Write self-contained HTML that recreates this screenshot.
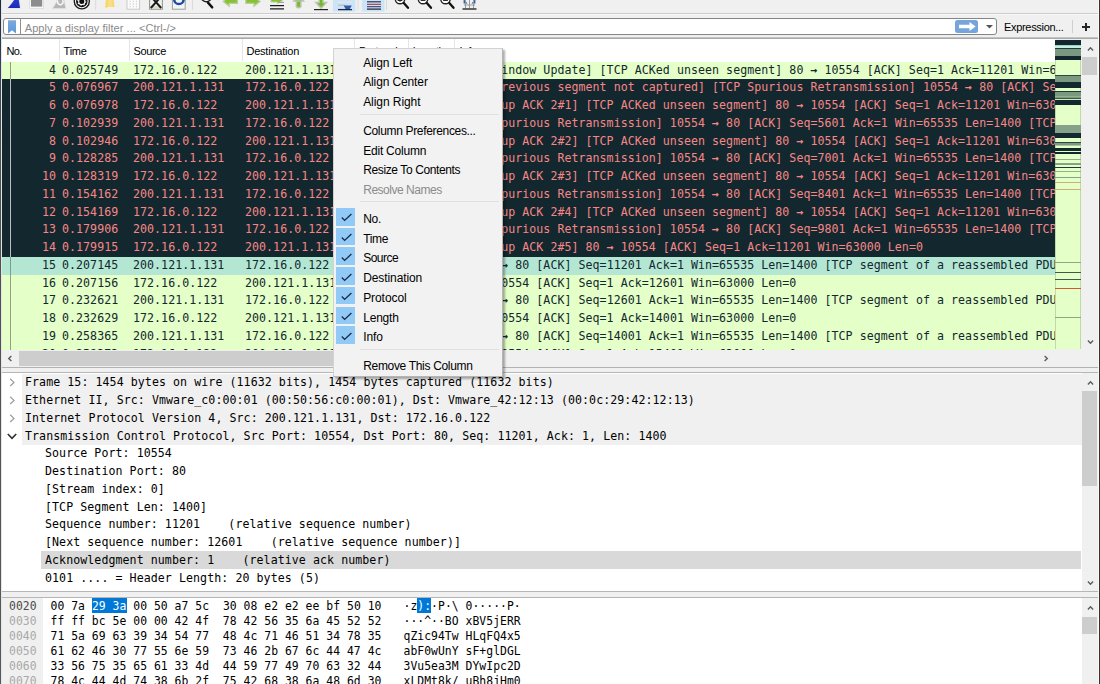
<!DOCTYPE html>
<html><head><meta charset="utf-8"><title>Wireshark</title>
<style>
html,body{margin:0;padding:0}
body{width:1100px;height:684px;overflow:hidden;background:#f0f0f0;position:relative;font-family:"Liberation Sans",sans-serif;font-size:12px;color:#000}
.abs{position:absolute}
.mono{font-family:"DejaVu Sans Mono","Liberation Mono",monospace;font-size:11.6px;letter-spacing:0.049px;white-space:pre}
#plist{position:absolute;left:2px;top:39px;width:1053px;height:311px;background:#fff;overflow:hidden}
.prow{position:absolute;left:0;width:1053px;height:18px;overflow:hidden}
.prow span{position:absolute;top:-0.8px;line-height:18px}
.g{background:#e4ffc7;color:#12272e}
.d{background:#12272e;color:#f78787}
.s{background:#b4e6d4;color:#12272e}
.hdr{position:absolute;top:0;height:22px;line-height:24px;font-size:11px;color:#000;white-space:nowrap}
.hsep{position:absolute;top:0;width:1px;height:22px;background:#e5e5e5}
#menu{position:absolute;left:333px;top:48px;width:168px;height:327px;background:#f2f2f2;border:1px solid #d2d2d2;border-right-color:#b4b4b4;border-bottom-color:#b4b4b4;box-shadow:1.5px 1.5px 2px rgba(0,0,0,.32);box-sizing:content-box}
.mi{position:absolute;left:29.2px;font-size:12px;line-height:20px;height:20px;color:#000;white-space:nowrap}
.mi.dis{color:#8b8b8b}
.msep{position:absolute;left:26px;right:3px;height:1px;background:#e0e0e0}
.chk{position:absolute;left:2.3px;width:18.7px;height:17.8px;background:#91c9f7}
#tree{position:absolute;left:2px;top:373px;width:1080px;height:219px;background:#fff;overflow:hidden}
.trow{position:absolute;left:0;width:1080px;height:18px}
.trow span{position:absolute;top:-0.3px;line-height:18px;color:#000;letter-spacing:0.071px}
#hex{position:absolute;left:2px;top:598px;width:1080px;height:86px;background:#fff;overflow:hidden}
.hrow{position:absolute;left:0;height:15px}
.hrow span{position:absolute;top:1.1px;line-height:15px;font-size:11.4px;letter-spacing:0.037px}
</style></head><body>

<div class="abs" style="left:0;top:0;width:1px;height:684px;background:linear-gradient(#1e2b46 0%,#2a3850 6%,#374557 10%,#4f4f4f 22%,#585858 100%);z-index:5"></div><div class="abs" style="left:1px;top:0;width:1px;height:684px;background:#e4e6e6;z-index:5"></div>
<div class="abs" style="left:1098px;top:0;width:1px;height:684px;background:#fbfaf6;z-index:5"></div><div class="abs" style="left:1099px;top:0;width:1px;height:684px;background:#3b3128;z-index:5"></div>
<div id="toolbar" class="abs" style="left:0;top:0;width:1099px;height:13px;overflow:hidden"><svg width="1099" height="13" viewBox="0 0 1099 13" style="position:absolute;left:0;top:0">
<defs><linearGradient id="fin" x1="0" y1="0" x2="0" y2="1"><stop offset="0" stop-color="#2c41d8"/><stop offset="1" stop-color="#1c2bb4"/></linearGradient>
<linearGradient id="fold" x1="0" y1="0" x2="1" y2="0"><stop offset="0" stop-color="#f6d25a"/><stop offset="0.5" stop-color="#f9e08a"/><stop offset="1" stop-color="#f6d566"/></linearGradient></defs>
<!-- shark fin -->
<path d="M15.4 -3 C12.8 1.5 9.8 5.6 6.2 9 L21.2 9 L19.2 -3 Z" fill="#e4e7f8"/>
<path d="M15.8 -3 C13.4 1.4 10.8 5 7.8 7.9 L20 7.9 L18.4 -3 Z" fill="url(#fin)"/>
<!-- stop -->
<rect x="29.6" y="-3" width="14" height="11.6" fill="#f7f7f7" stroke="#dddddd" stroke-width="0.8"/>
<rect x="31" y="-3" width="11.2" height="9.6" fill="#8d8d8d"/>
<!-- restart -->
<path d="M58.6 -3 C57 1.5 54.8 5.4 52.2 8.6 L65.8 8.6 L63.6 -3 Z" fill="#b7b7b7" stroke="#e0e0e0" stroke-width="0.9"/>
<path d="M58 0.6 A2.7 2.7 0 1 0 62.4 0.2" fill="none" stroke="#f6f6f6" stroke-width="1.5"/>
<!-- options -->
<circle cx="81.8" cy="1.4" r="7.5" fill="#fbfbfb" stroke="#1d1d1d" stroke-width="1.4"/>
<circle cx="81.8" cy="1.4" r="4.7" fill="#fff" stroke="#141414" stroke-width="2.1"/>
<circle cx="81.8" cy="1.4" r="3.9" fill="none" stroke="#fff" stroke-width="1.1" stroke-dasharray="1.2 1.85"/>
<circle cx="81.8" cy="1.4" r="2.5" fill="#101010"/>
<rect x="95.2" y="0" width="1" height="10" fill="#dadada"/>
<!-- folder -->
<path d="M106.2 -3 L113.4 -3 L114.5 7 L107.3 7 L106.6 8.4 L105.2 7 Z" fill="url(#fold)"/>
<!-- grid/save -->
<rect x="127" y="-3" width="12.6" height="12.2" fill="#fbfbfb" stroke="#c9c9c9" stroke-width="1"/>
<path d="M130.2 -2V8M133.3 -2V8M136.4 -2V8" stroke="#d4d4d4" stroke-width="1" stroke-dasharray="1.6 1" fill="none"/>
<!-- close -->
<rect x="149.6" y="-3" width="12.8" height="12.2" fill="#f1f1ea" stroke="#8f8f8f" stroke-width="1"/>
<rect x="150.2" y="6" width="11.6" height="2.6" fill="#dcdcc6"/>
<path d="M150.8 8 L161.2 -3.6 M161.2 8 L150.8 -3.6" stroke="#1a1a1a" stroke-width="2" fill="none"/>
<!-- reload -->
<rect x="172.4" y="-3" width="12.8" height="12.2" fill="#f3f4f7" stroke="#9d9d9d" stroke-width="1"/>
<path d="M174.2 -0.6 A4.7 4.7 0 0 0 183.6 -0.6" fill="none" stroke="#1b4b9c" stroke-width="2.5"/>
<rect x="192" y="0" width="1" height="10" fill="#dadada"/>
<!-- find -->
<circle cx="206.3" cy="-3.2" r="5" fill="#fff" stroke="#222" stroke-width="1.5"/>
<path d="M208 2.6 L212.2 7.4" stroke="#111" stroke-width="2.4" stroke-linecap="round"/>
<!-- back -->
<path d="M223.3 1.4 L229.2 -3.6 L229.2 -1 L237.4 -1 L237.4 3.4 L229.2 3.4 L229.2 6.2 Z" fill="#86c232" stroke="#b9cfa0" stroke-width="1.3"/>
<!-- fwd -->
<path d="M260 1.4 L254 -3.6 L254 -1 L245.8 -1 L245.8 3.4 L254 3.4 L254 6.2 Z" fill="#86c232" stroke="#b9cfa0" stroke-width="1.3"/>
<!-- goto -->
<path d="M271 -3 H279 L282.4 0.6 L277.4 3.6 L277.4 2 H271 Z" fill="#86c232" stroke="#b9cfa0" stroke-width="1"/>
<path d="M278.4 2.4H284" stroke="#9a9a9a" stroke-width="1"/>
<path d="M270 5.6H284M270 8.8H284" stroke="#1c1c1c" stroke-width="1.3"/>
<!-- first -->
<path d="M296.4 -3 H300.8 V6.6 Q298.6 8.8 296.4 6.6 Z" fill="#7dbb2e" stroke="#b8c2ae" stroke-width="1.5"/>
<path d="M293.8 1 L298.6 -4 L303.4 1 L300.8 1 L296.4 1 Z" fill="#7dbb2e" stroke="#b8c2ae" stroke-width="1.4"/>
<!-- last -->
<path d="M319.2 -3 H323 V2.4 H326.4 L321.1 8.2 L315.8 2.4 H319.2 Z" fill="#74b728" stroke="#b8c6aa" stroke-width="1.5"/>
<path d="M314 9.6H328" stroke="#222" stroke-width="1.2"/>
<!-- autoscroll (checked) -->
<rect x="333" y="-2" width="22.5" height="13.6" fill="#cce4f7"/>
<path d="M338 2.2H352" stroke="#e9e9e9" stroke-width="1"/>
<path d="M338 5.2H345" stroke="#b5b5b5" stroke-width="1"/>
<path d="M343.6 5.6 H351.8 L349.6 9.2 H345.8 Z" fill="#2b5da8"/>
<path d="M338 9.6H352" stroke="#1a2a44" stroke-width="1.3"/>
<rect x="357.5" y="0" width="1" height="10" fill="#dadada"/>
<!-- colorize (checked) -->
<rect x="362" y="-2" width="22.5" height="13.6" fill="#cce4f7"/>
<path d="M367 1.8H381" stroke="#1c2340" stroke-width="1.1"/>
<path d="M367 4.3H381" stroke="#b23232" stroke-width="1.1"/>
<path d="M367 6.7H381" stroke="#2a3a7a" stroke-width="1.1"/>
<path d="M367 9.1H381" stroke="#1a1a1a" stroke-width="1.2"/>
<rect x="386" y="0" width="1" height="10" fill="#dadada"/>
<!-- zoom in -->
<circle cx="400" cy="-0.9" r="4.7" fill="#fff" stroke="#222" stroke-width="1.4"/>
<path d="M400 -2V1.8M397.6 0.4H402.4" stroke="#222" stroke-width="1.2"/>
<path d="M403.8 3 L408 7.8" stroke="#111" stroke-width="2.3" stroke-linecap="round"/>
<!-- zoom out -->
<circle cx="423" cy="-0.9" r="4.7" fill="#fff" stroke="#222" stroke-width="1.4"/>
<path d="M420.6 0.4H425.4" stroke="#222" stroke-width="1.1"/>
<path d="M426.8 3 L431 7.8" stroke="#111" stroke-width="2.3" stroke-linecap="round"/>
<!-- zoom 1:1 -->
<circle cx="445.5" cy="-0.9" r="4.7" fill="#fff" stroke="#222" stroke-width="1.4"/>
<path d="M443.1 0.4H447.9" stroke="#222" stroke-width="1.1"/>
<path d="M449.3 3 L453.5 7.8" stroke="#111" stroke-width="2.3" stroke-linecap="round"/>
<!-- resize columns -->
<path d="M463.6 -1 L467.6 3.4 L463.6 3.4 Z M475.4 -1 L471.4 3.4 L475.4 3.4 Z" fill="#2b5da8"/>
<path d="M465.5 -2V8.4M469.5 -2V8.4M473.5 -2V8.4M464 5H475" stroke="#9a9a9a" stroke-width="1" fill="none"/>
<path d="M462.5 9H476.5" stroke="#1a1a1a" stroke-width="1.3"/>
</svg>
</div>
<div class="abs" style="left:1px;top:13px;width:1098px;height:1px;background:#cdcdcd"></div><div class="abs" style="left:1px;top:14px;width:1098px;height:1px;background:#f8f8f8"></div>
<div class="abs" style="left:3px;top:18px;width:992px;height:15px;border:1px solid #858585;border-radius:3px;background:#fff"></div>
<svg class="abs" style="left:8px;top:20px" width="8" height="14" viewBox="0 0 8 14"><defs><linearGradient id="bk" x1="0" y1="0" x2="0" y2="1"><stop offset="0" stop-color="#7eaadd"/><stop offset="1" stop-color="#5f97d6"/></linearGradient></defs><path d="M0 0.3H8V13.4L4 10.2L0 13.4Z" fill="url(#bk)"/></svg>
<div class="abs" style="left:20px;top:19px;width:1px;height:15px;background:#8f8f8f"></div>
<div class="abs" style="left:24.8px;top:17.6px;height:20px;line-height:21px;font-size:11px;letter-spacing:0.039px;color:#8a8a8a;white-space:nowrap">Apply a display filter ... &lt;Ctrl-/&gt;</div>
<div class="abs" style="left:955px;top:20px;width:23px;height:13px;background:#76a5db;border-radius:2.5px"></div>
<svg class="abs" style="left:958.5px;top:22.3px" width="17" height="9" viewBox="0 0 17 9"><path d="M0 2.8H10.5V0L16.6 4.5L10.5 9V6.2H0Z" fill="#fff"/></svg>
<svg class="abs" style="left:985.5px;top:25px" width="7" height="4" viewBox="0 0 7 4"><path d="M0 0H7L3.5 3.6Z" fill="#555"/></svg>
<div class="abs" style="left:1004px;top:17.4px;height:20px;line-height:21px;font-size:11px;letter-spacing:-0.316px;color:#000;white-space:nowrap">Expression...</div>
<div class="abs" style="left:1072px;top:20px;width:1px;height:13px;background:#cfcfcf"></div>
<div class="abs" style="left:1081.6px;top:26.2px;width:8.4px;height:1.7px;background:#262626"></div>
<div class="abs" style="left:1085px;top:22.8px;width:1.7px;height:8.4px;background:#262626"></div>

<div class="abs" style="left:1px;top:37px;width:1098px;height:1px;background:#c4c4c4"></div>
<div class="abs" style="left:1px;top:38px;width:1098px;height:1px;background:#a9a9a9"></div>
<div id="plist">
<div class="hdr" style="left:4.5px;letter-spacing:-0.642px">No.</div>
<div class="hdr" style="left:61.6px;letter-spacing:-0.262px">Time</div>
<div class="hdr" style="left:131.6px;letter-spacing:-0.427px">Source</div>
<div class="hdr" style="left:244.4px;letter-spacing:-0.204px">Destination</div>
<div class="hdr" style="left:357px;letter-spacing:-0.222px">Protocol</div>
<div class="hdr" style="left:410.8px;letter-spacing:-0.343px">Length</div>
<div class="hdr" style="left:457.4px;letter-spacing:-0.190px">Info</div>
<div class="hsep" style="left:57px"></div>
<div class="hsep" style="left:127px"></div>
<div class="hsep" style="left:240px"></div>
<div class="hsep" style="left:352px"></div>
<div class="hsep" style="left:406px"></div>
<div class="hsep" style="left:452px"></div>
<div class="prow mono g" style="top:22.50px"><i style="position:absolute;left:8px;top:0;width:1px;height:18px;background:#91a283"></i><span style="left:47px">4</span><span style="left:60px">0.025749</span><span style="left:131px">172.16.0.122</span><span style="left:243px">200.121.1.131</span><span style="left:357px">TCP</span><span style="left:436px">54</span><span style="left:457px">[TCP Window Update] [TCP ACKed unseen segment] 80 <b>→</b> 10554 [ACK] Seq=1 Ack=11201 Win=63000 Len=0</span></div>
<div class="prow mono d" style="top:40.25px"><i style="position:absolute;left:8px;top:0;width:1px;height:18px;background:#bdbbc3"></i><span style="left:47px">5</span><span style="left:60px">0.076967</span><span style="left:131px">200.121.1.131</span><span style="left:243px">172.16.0.122</span><span style="left:357px">TCP</span><span style="left:422px">1454</span><span style="left:457px">[TCP Previous segment not captured] [TCP Spurious Retransmission] 10554 <b>→</b> 80 [ACK] Seq=4201 Ack=1 Win=65535 Len=1400</span></div>
<div class="prow mono d" style="top:58.00px"><i style="position:absolute;left:8px;top:0;width:1px;height:18px;background:#bdbbc3"></i><span style="left:47px">6</span><span style="left:60px">0.076978</span><span style="left:131px">172.16.0.122</span><span style="left:243px">200.121.1.131</span><span style="left:357px">TCP</span><span style="left:436px">54</span><span style="left:457px">[TCP Dup ACK 2#1] [TCP ACKed unseen segment] 80 <b>→</b> 10554 [ACK] Seq=1 Ack=11201 Win=63000 Len=0</span></div>
<div class="prow mono d" style="top:75.75px"><i style="position:absolute;left:8px;top:0;width:1px;height:18px;background:#bdbbc3"></i><span style="left:47px">7</span><span style="left:60px">0.102939</span><span style="left:131px">200.121.1.131</span><span style="left:243px">172.16.0.122</span><span style="left:357px">TCP</span><span style="left:422px">1454</span><span style="left:457px">[TCP Spurious Retransmission] 10554 <b>→</b> 80 [ACK] Seq=5601 Ack=1 Win=65535 Len=1400 [TCP segment of a reassembled PDU]</span></div>
<div class="prow mono d" style="top:93.50px"><i style="position:absolute;left:8px;top:0;width:1px;height:18px;background:#bdbbc3"></i><span style="left:47px">8</span><span style="left:60px">0.102946</span><span style="left:131px">172.16.0.122</span><span style="left:243px">200.121.1.131</span><span style="left:357px">TCP</span><span style="left:436px">54</span><span style="left:457px">[TCP Dup ACK 2#2] [TCP ACKed unseen segment] 80 <b>→</b> 10554 [ACK] Seq=1 Ack=11201 Win=63000 Len=0</span></div>
<div class="prow mono d" style="top:111.25px"><i style="position:absolute;left:8px;top:0;width:1px;height:18px;background:#bdbbc3"></i><span style="left:47px">9</span><span style="left:60px">0.128285</span><span style="left:131px">200.121.1.131</span><span style="left:243px">172.16.0.122</span><span style="left:357px">TCP</span><span style="left:422px">1454</span><span style="left:457px">[TCP Spurious Retransmission] 10554 <b>→</b> 80 [ACK] Seq=7001 Ack=1 Win=65535 Len=1400 [TCP segment of a reassembled PDU]</span></div>
<div class="prow mono d" style="top:129.00px"><i style="position:absolute;left:8px;top:0;width:1px;height:18px;background:#bdbbc3"></i><span style="left:40px">10</span><span style="left:60px">0.128319</span><span style="left:131px">172.16.0.122</span><span style="left:243px">200.121.1.131</span><span style="left:357px">TCP</span><span style="left:436px">54</span><span style="left:457px">[TCP Dup ACK 2#3] [TCP ACKed unseen segment] 80 <b>→</b> 10554 [ACK] Seq=1 Ack=11201 Win=63000 Len=0</span></div>
<div class="prow mono d" style="top:146.75px"><i style="position:absolute;left:8px;top:0;width:1px;height:18px;background:#bdbbc3"></i><span style="left:40px">11</span><span style="left:60px">0.154162</span><span style="left:131px">200.121.1.131</span><span style="left:243px">172.16.0.122</span><span style="left:357px">TCP</span><span style="left:422px">1454</span><span style="left:457px">[TCP Spurious Retransmission] 10554 <b>→</b> 80 [ACK] Seq=8401 Ack=1 Win=65535 Len=1400 [TCP segment of a reassembled PDU]</span></div>
<div class="prow mono d" style="top:164.50px"><i style="position:absolute;left:8px;top:0;width:1px;height:18px;background:#bdbbc3"></i><span style="left:40px">12</span><span style="left:60px">0.154169</span><span style="left:131px">172.16.0.122</span><span style="left:243px">200.121.1.131</span><span style="left:357px">TCP</span><span style="left:436px">54</span><span style="left:457px">[TCP Dup ACK 2#4] [TCP ACKed unseen segment] 80 <b>→</b> 10554 [ACK] Seq=1 Ack=11201 Win=63000 Len=0</span></div>
<div class="prow mono d" style="top:182.25px"><i style="position:absolute;left:8px;top:0;width:1px;height:18px;background:#bdbbc3"></i><span style="left:40px">13</span><span style="left:60px">0.179906</span><span style="left:131px">200.121.1.131</span><span style="left:243px">172.16.0.122</span><span style="left:357px">TCP</span><span style="left:422px">1454</span><span style="left:457px">[TCP Spurious Retransmission] 10554 <b>→</b> 80 [ACK] Seq=9801 Ack=1 Win=65535 Len=1400 [TCP segment of a reassembled PDU]</span></div>
<div class="prow mono d" style="top:200.00px"><i style="position:absolute;left:8px;top:0;width:1px;height:18px;background:#bdbbc3"></i><span style="left:40px">14</span><span style="left:60px">0.179915</span><span style="left:131px">172.16.0.122</span><span style="left:243px">200.121.1.131</span><span style="left:357px">TCP</span><span style="left:436px">54</span><span style="left:457px">[TCP Dup ACK 2#5] 80 <b>→</b> 10554 [ACK] Seq=1 Ack=11201 Win=63000 Len=0</span></div>
<div class="prow mono s" style="top:217.75px"><i style="position:absolute;left:8px;top:0;width:1px;height:18px;background:#7f9c90"></i><span style="left:40px">15</span><span style="left:60px">0.207145</span><span style="left:131px">200.121.1.131</span><span style="left:243px">172.16.0.122</span><span style="left:357px">TCP</span><span style="left:422px">1454</span><span style="left:457px">10554 <b>→</b> 80 [ACK] Seq=11201 Ack=1 Win=65535 Len=1400 [TCP segment of a reassembled PDU]</span></div>
<div class="prow mono g" style="top:235.50px"><i style="position:absolute;left:8px;top:0;width:1px;height:18px;background:#91a283"></i><span style="left:40px">16</span><span style="left:60px">0.207156</span><span style="left:131px">172.16.0.122</span><span style="left:243px">200.121.1.131</span><span style="left:357px">TCP</span><span style="left:436px">54</span><span style="left:457px">80 <b>→</b> 10554 [ACK] Seq=1 Ack=12601 Win=63000 Len=0</span></div>
<div class="prow mono g" style="top:253.25px"><i style="position:absolute;left:8px;top:0;width:1px;height:18px;background:#91a283"></i><span style="left:40px">17</span><span style="left:60px">0.232621</span><span style="left:131px">200.121.1.131</span><span style="left:243px">172.16.0.122</span><span style="left:357px">TCP</span><span style="left:422px">1454</span><span style="left:457px">10554 <b>→</b> 80 [ACK] Seq=12601 Ack=1 Win=65535 Len=1400 [TCP segment of a reassembled PDU]</span></div>
<div class="prow mono g" style="top:271.00px"><i style="position:absolute;left:8px;top:0;width:1px;height:18px;background:#91a283"></i><span style="left:40px">18</span><span style="left:60px">0.232629</span><span style="left:131px">172.16.0.122</span><span style="left:243px">200.121.1.131</span><span style="left:357px">TCP</span><span style="left:436px">54</span><span style="left:457px">80 <b>→</b> 10554 [ACK] Seq=1 Ack=14001 Win=63000 Len=0</span></div>
<div class="prow mono g" style="top:288.75px"><i style="position:absolute;left:8px;top:0;width:1px;height:18px;background:#91a283"></i><span style="left:40px">19</span><span style="left:60px">0.258365</span><span style="left:131px">200.121.1.131</span><span style="left:243px">172.16.0.122</span><span style="left:357px">TCP</span><span style="left:422px">1454</span><span style="left:457px">10554 <b>→</b> 80 [ACK] Seq=14001 Ack=1 Win=65535 Len=1400 [TCP segment of a reassembled PDU]</span></div>
<div class="prow mono g" style="top:306.50px"><i style="position:absolute;left:8px;top:0;width:1px;height:18px;background:#91a283"></i><span style="left:40px">20</span><span style="left:60px">0.258373</span><span style="left:131px">172.16.0.122</span><span style="left:243px">200.121.1.131</span><span style="left:357px">TCP</span><span style="left:436px">54</span><span style="left:457px">80 <b>→</b> 10554 [ACK] Seq=1 Ack=15401 Win=63000 Len=0</span></div>
</div>
<div id="minimap" class="abs" style="left:1055px;top:39.8px;width:26px;height:309.4px;background:#e4ffc7;overflow:hidden;box-shadow:inset 1px 0 0 rgba(120,150,110,.35),inset -1px 0 0 rgba(120,150,110,.35)"><div class="abs" style="left:0;top:0.0px;width:26px;height:5.0px;background:#12272e"></div><div class="abs" style="left:0;top:5.0px;width:26px;height:1.6px;background:#9fd2cc"></div><div class="abs" style="left:0;top:6.6px;width:26px;height:1.6px;background:#c6efe0"></div><div class="abs" style="left:0;top:8.2px;width:26px;height:1.0px;background:#1c3a38"></div><div class="abs" style="left:0;top:9.2px;width:26px;height:3.6px;background:#7b9880"></div><div class="abs" style="left:0;top:12.8px;width:26px;height:0.8px;background:#8ba98c"></div><div class="abs" style="left:0;top:13.6px;width:26px;height:2.6px;background:#7b9880"></div><div class="abs" style="left:0;top:16.2px;width:26px;height:4.5px;background:#12272e"></div><div class="abs" style="left:0;top:35.0px;width:26px;height:1.2px;background:#2c4a40"></div><div class="abs" style="left:0;top:36.2px;width:26px;height:6.2px;background:#7b9880"></div><div class="abs" style="left:0;top:42.4px;width:26px;height:5.5px;background:#12272e"></div><div class="abs" style="left:0;top:51.1px;width:26px;height:1.1px;background:#1c3a38"></div><div class="abs" style="left:0;top:52.2px;width:26px;height:3.6px;background:#7b9880"></div><div class="abs" style="left:0;top:55.8px;width:26px;height:1.0px;background:#93b092"></div><div class="abs" style="left:0;top:56.8px;width:26px;height:1.4px;background:#7b9880"></div><div class="abs" style="left:0;top:58.2px;width:26px;height:0.8px;background:#3a5a4c"></div><div class="abs" style="left:0;top:59.0px;width:26px;height:1.2px;background:#cdeab8"></div><div class="abs" style="left:0;top:60.2px;width:26px;height:5.0px;background:#12272e"></div><div class="abs" style="left:0;top:85.2px;width:26px;height:7.8px;background:#86a189"></div><div class="abs" style="left:0;top:93.0px;width:26px;height:5.0px;background:#12272e"></div><div class="abs" style="left:0;top:102.0px;width:26px;height:1.2px;background:#2a4a3f"></div><div class="abs" style="left:0;top:103.2px;width:26px;height:2.2px;background:#7d9a82"></div><div class="abs" style="left:0;top:105.4px;width:26px;height:1.3px;background:#a9c4a0"></div><div class="abs" style="left:0;top:108.2px;width:26px;height:2.7px;background:#10292c"></div><div class="abs" style="left:0;top:112.2px;width:26px;height:1.9px;background:#10292c"></div><div class="abs" style="left:0;top:119.3px;width:26px;height:0.9px;background:#93ad8c"></div><div class="abs" style="left:0;top:123.4px;width:26px;height:1.5px;background:#86a386"></div><div class="abs" style="left:0;top:126.9px;width:26px;height:1.2px;background:#1c3a38"></div><div class="abs" style="left:0;top:131.0px;width:26px;height:1.0px;background:#98b290"></div><div class="abs" style="left:0;top:137.1px;width:26px;height:1.5px;background:#86a386"></div><div class="abs" style="left:0;top:142.7px;width:26px;height:1.0px;background:#cdae74"></div><div class="abs" style="left:0;top:148.9px;width:26px;height:1.0px;background:#cdae74"></div><div class="abs" style="left:0;top:221.8px;width:26px;height:0.9px;background:#8fa586"></div><div class="abs" style="left:0;top:231.9px;width:26px;height:1.3px;background:#3e5a48"></div><div class="abs" style="left:0;top:238.8px;width:26px;height:1.3px;background:#3e5a48"></div><div class="abs" style="left:0;top:248.0px;width:26px;height:1.2px;background:#d05a30"></div><div class="abs" style="left:0;top:276.8px;width:26px;height:0.9px;background:#8fa586"></div></div>
<div class="abs" style="left:1081px;top:39px;width:17px;height:311px;background:#f0f0f0"></div>
<div class="abs" style="left:1082px;top:56.5px;width:15px;height:18px;background:#cdcdcd"></div>
<svg class="abs" style="left:1085.5px;top:46px" width="9" height="6" viewBox="0 0 9 6"><path d="M1.9 4.5L4.5 1.8L7.1 4.5" fill="none" stroke="#5c5c5c" stroke-width="1.4"/></svg>
<svg class="abs" style="left:1085.5px;top:339px" width="9" height="6" viewBox="0 0 9 6"><path d="M1.9 1.6L4.5 4.3L7.1 1.6" fill="none" stroke="#5c5c5c" stroke-width="1.4"/></svg>

<div class="abs" style="left:2px;top:350px;width:1097px;height:17px;background:#f0f0f0"></div>
<div class="abs" style="left:19px;top:350.6px;width:330px;height:15.2px;background:#cdcdcd"></div>
<svg class="abs" style="left:7px;top:354px" width="6" height="9" viewBox="0 0 6 9"><path d="M4.4 1.9L1.7 4.5L4.4 7.1" fill="none" stroke="#5c5c5c" stroke-width="1.4"/></svg>
<svg class="abs" style="left:1042.6px;top:354px" width="6" height="9" viewBox="0 0 6 9"><path d="M1.6 1.9L4.3 4.5L1.6 7.1" fill="none" stroke="#5c5c5c" stroke-width="1.4"/></svg>

<div class="abs" style="left:2px;top:367px;width:1096px;height:1px;background:#b2b2b2"></div>
<div class="abs" style="left:2px;top:372px;width:1096px;height:1px;background:#b6b6b6"></div>
<div id="tree">
<div class="trow mono" style="top:0.50px"><div class="abs" style="left:20px;top:0;width:1060px;height:18px;background:#f0f0f0"></div><svg class="abs" style="left:7px;top:4.6px" width="7" height="9" viewBox="0 0 7 9"><path d="M1.2 0.8L5 4.4L1.2 8" fill="none" stroke="#9a9a9a" stroke-width="1.2"/></svg><span style="left:23px">Frame 15: 1454 bytes on wire (11632 bits), 1454 bytes captured (11632 bits)</span></div>
<div class="trow mono" style="top:18.28px"><div class="abs" style="left:20px;top:0;width:1060px;height:18px;background:#f0f0f0"></div><svg class="abs" style="left:7px;top:4.6px" width="7" height="9" viewBox="0 0 7 9"><path d="M1.2 0.8L5 4.4L1.2 8" fill="none" stroke="#9a9a9a" stroke-width="1.2"/></svg><span style="left:23px">Ethernet II, Src: Vmware_c0:00:01 (00:50:56:c0:00:01), Dst: Vmware_42:12:13 (00:0c:29:42:12:13)</span></div>
<div class="trow mono" style="top:36.06px"><div class="abs" style="left:20px;top:0;width:1060px;height:18px;background:#f0f0f0"></div><svg class="abs" style="left:7px;top:4.6px" width="7" height="9" viewBox="0 0 7 9"><path d="M1.2 0.8L5 4.4L1.2 8" fill="none" stroke="#9a9a9a" stroke-width="1.2"/></svg><span style="left:23px">Internet Protocol Version 4, Src: 200.121.1.131, Dst: 172.16.0.122</span></div>
<div class="trow mono" style="top:53.84px"><div class="abs" style="left:20px;top:0;width:1060px;height:18px;background:#f0f0f0"></div><svg class="abs" style="left:5px;top:6px" width="10" height="7" viewBox="0 0 10 7"><path d="M0.8 1L5 5.4L9.2 1" fill="none" stroke="#303030" stroke-width="1.6"/></svg><span style="left:23px">Transmission Control Protocol, Src Port: 10554, Dst Port: 80, Seq: 11201, Ack: 1, Len: 1400</span></div>
<div class="trow mono" style="top:71.62px"><span style="left:43px">Source Port: 10554</span></div>
<div class="trow mono" style="top:89.40px"><span style="left:43px">Destination Port: 80</span></div>
<div class="trow mono" style="top:107.18px"><span style="left:43px">[Stream index: 0]</span></div>
<div class="trow mono" style="top:124.96px"><span style="left:43px">[TCP Segment Len: 1400]</span></div>
<div class="trow mono" style="top:142.74px"><span style="left:43px">Sequence number: 11201    (relative sequence number)</span></div>
<div class="trow mono" style="top:160.52px"><span style="left:43px">[Next sequence number: 12601    (relative sequence number)]</span></div>
<div class="trow mono" style="top:178.30px"><div class="abs" style="left:39.3px;top:0;width:1040px;height:17.6px;background:#d9d9d9"></div><span style="left:43px">Acknowledgment number: 1    (relative ack number)</span></div>
<div class="trow mono" style="top:196.08px"><span style="left:43px">0101 .... = Header Length: 20 bytes (5)</span></div>
</div>
<div class="abs" style="left:1082px;top:373px;width:17px;height:219px;background:#f0f0f0"></div>
<div class="abs" style="left:1082px;top:390.5px;width:15px;height:95px;background:#cdcdcd"></div>
<svg class="abs" style="left:1085.5px;top:380px" width="9" height="6" viewBox="0 0 9 6"><path d="M1.9 4.5L4.5 1.8L7.1 4.5" fill="none" stroke="#5c5c5c" stroke-width="1.4"/></svg>
<svg class="abs" style="left:1085.5px;top:580px" width="9" height="6" viewBox="0 0 9 6"><path d="M1.9 1.6L4.5 4.3L7.1 1.6" fill="none" stroke="#5c5c5c" stroke-width="1.4"/></svg>

<div class="abs" style="left:2px;top:591px;width:1096px;height:1px;background:#b6b6b6"></div>
<div class="abs" style="left:2px;top:597px;width:1096px;height:1px;background:#b6b6b6"></div>
<div id="hex">
<div class="abs" style="left:0;top:0;width:41px;height:86px;background:#f0f0f0"></div>
<div class="hrow mono" style="top:0.40px"><div class="abs" style="left:90px;top:0;width:35px;height:15px;background:#0078d7"></div><div class="abs" style="left:415px;top:0;width:14px;height:15px;background:#0078d7"></div><span style="left:7px;color:#4a4a4a">0020</span><span style="left:48.5px;color:#000">00 7a <b style="font-weight:normal;color:#fff">29 3a</b> 00 50 a7 5c  30 08 e2 e2 ee bf 50 10</span><span style="left:401.5px;color:#000">·z<b style="font-weight:normal;color:#fff">):</b>·P·\ 0·····P·</span></div>
<div class="hrow mono" style="top:15.25px"><span style="left:7px;color:#a9a9a9">0030</span><span style="left:48.5px;color:#000">ff ff bc 5e 00 00 42 4f  78 42 56 35 6a 45 52 52</span><span style="left:401.5px;color:#000">···^··BO xBV5jERR</span></div>
<div class="hrow mono" style="top:30.10px"><span style="left:7px;color:#a9a9a9">0040</span><span style="left:48.5px;color:#000">71 5a 69 63 39 34 54 77  48 4c 71 46 51 34 78 35</span><span style="left:401.5px;color:#000">qZic94Tw HLqFQ4x5</span></div>
<div class="hrow mono" style="top:44.95px"><span style="left:7px;color:#a9a9a9">0050</span><span style="left:48.5px;color:#000">61 62 46 30 77 55 6e 59  73 46 2b 67 6c 44 47 4c</span><span style="left:401.5px;color:#000">abF0wUnY sF+glDGL</span></div>
<div class="hrow mono" style="top:59.80px"><span style="left:7px;color:#a9a9a9">0060</span><span style="left:48.5px;color:#000">33 56 75 35 65 61 33 4d  44 59 77 49 70 63 32 44</span><span style="left:401.5px;color:#000">3Vu5ea3M DYwIpc2D</span></div>
<div class="hrow mono" style="top:74.65px"><span style="left:7px;color:#a9a9a9">0070</span><span style="left:48.5px;color:#000">78 4c 44 4d 74 38 6b 2f  75 42 68 38 6a 48 6d 30</span><span style="left:401.5px;color:#000">xLDMt8k/ uBh8jHm0</span></div>
</div>
<div class="abs" style="left:1082px;top:598px;width:17px;height:86px;background:#f0f0f0"></div>
<div class="abs" style="left:1082px;top:617px;width:15px;height:17.3px;background:#cdcdcd"></div>
<svg class="abs" style="left:1085.5px;top:604.6px" width="9" height="6" viewBox="0 0 9 6"><path d="M1.9 4.5L4.5 1.8L7.1 4.5" fill="none" stroke="#5c5c5c" stroke-width="1.4"/></svg>

<div id="menu">
<div class="mi" style="top:3.8px;letter-spacing:-0.105px">Align Left</div>
<div class="mi" style="top:23.4px;letter-spacing:-0.122px">Align Center</div>
<div class="mi" style="top:43.1px;letter-spacing:-0.068px">Align Right</div>
<div class="mi" style="top:71.9px;letter-spacing:-0.334px">Column Preferences...</div>
<div class="mi" style="top:91.5px;letter-spacing:-0.216px">Edit Column</div>
<div class="mi" style="top:111.3px;letter-spacing:-0.381px">Resize To Contents</div>
<div class="mi dis" style="top:131.0px;letter-spacing:-0.478px">Resolve Names</div>
<div class="chk" style="top:158.8px"><svg style="position:absolute;left:4.6px;top:5.6px" width="12" height="9" viewBox="0 0 12 9"><path d="M0.8 4.6L3.6 7.4L10.4 1" fill="none" stroke="#1b2a44" stroke-width="1.35"/></svg></div>
<div class="mi" style="top:159.8px;letter-spacing:-0.229px">No.</div>
<div class="chk" style="top:178.5px"><svg style="position:absolute;left:4.6px;top:5.6px" width="12" height="9" viewBox="0 0 12 9"><path d="M0.8 4.6L3.6 7.4L10.4 1" fill="none" stroke="#1b2a44" stroke-width="1.35"/></svg></div>
<div class="mi" style="top:179.5px;letter-spacing:-0.309px">Time</div>
<div class="chk" style="top:198.2px"><svg style="position:absolute;left:4.6px;top:5.6px" width="12" height="9" viewBox="0 0 12 9"><path d="M0.8 4.6L3.6 7.4L10.4 1" fill="none" stroke="#1b2a44" stroke-width="1.35"/></svg></div>
<div class="mi" style="top:199.2px;letter-spacing:-0.505px">Source</div>
<div class="chk" style="top:218.0px"><svg style="position:absolute;left:4.6px;top:5.6px" width="12" height="9" viewBox="0 0 12 9"><path d="M0.8 4.6L3.6 7.4L10.4 1" fill="none" stroke="#1b2a44" stroke-width="1.35"/></svg></div>
<div class="mi" style="top:219.0px;letter-spacing:-0.095px">Destination</div>
<div class="chk" style="top:237.7px"><svg style="position:absolute;left:4.6px;top:5.6px" width="12" height="9" viewBox="0 0 12 9"><path d="M0.8 4.6L3.6 7.4L10.4 1" fill="none" stroke="#1b2a44" stroke-width="1.35"/></svg></div>
<div class="mi" style="top:238.7px;letter-spacing:-0.079px">Protocol</div>
<div class="chk" style="top:257.5px"><svg style="position:absolute;left:4.6px;top:5.6px" width="12" height="9" viewBox="0 0 12 9"><path d="M0.8 4.6L3.6 7.4L10.4 1" fill="none" stroke="#1b2a44" stroke-width="1.35"/></svg></div>
<div class="mi" style="top:258.5px;letter-spacing:-0.203px">Length</div>
<div class="chk" style="top:277.2px"><svg style="position:absolute;left:4.6px;top:5.6px" width="12" height="9" viewBox="0 0 12 9"><path d="M0.8 4.6L3.6 7.4L10.4 1" fill="none" stroke="#1b2a44" stroke-width="1.35"/></svg></div>
<div class="mi" style="top:278.2px;letter-spacing:-0.083px">Info</div>
<div class="mi" style="top:306.9px;letter-spacing:-0.322px">Remove This Column</div>
<div class="msep" style="top:64.6px"></div>
<div class="msep" style="top:152.3px"></div>
<div class="msep" style="top:300.2px"></div>
</div>
</body></html>
